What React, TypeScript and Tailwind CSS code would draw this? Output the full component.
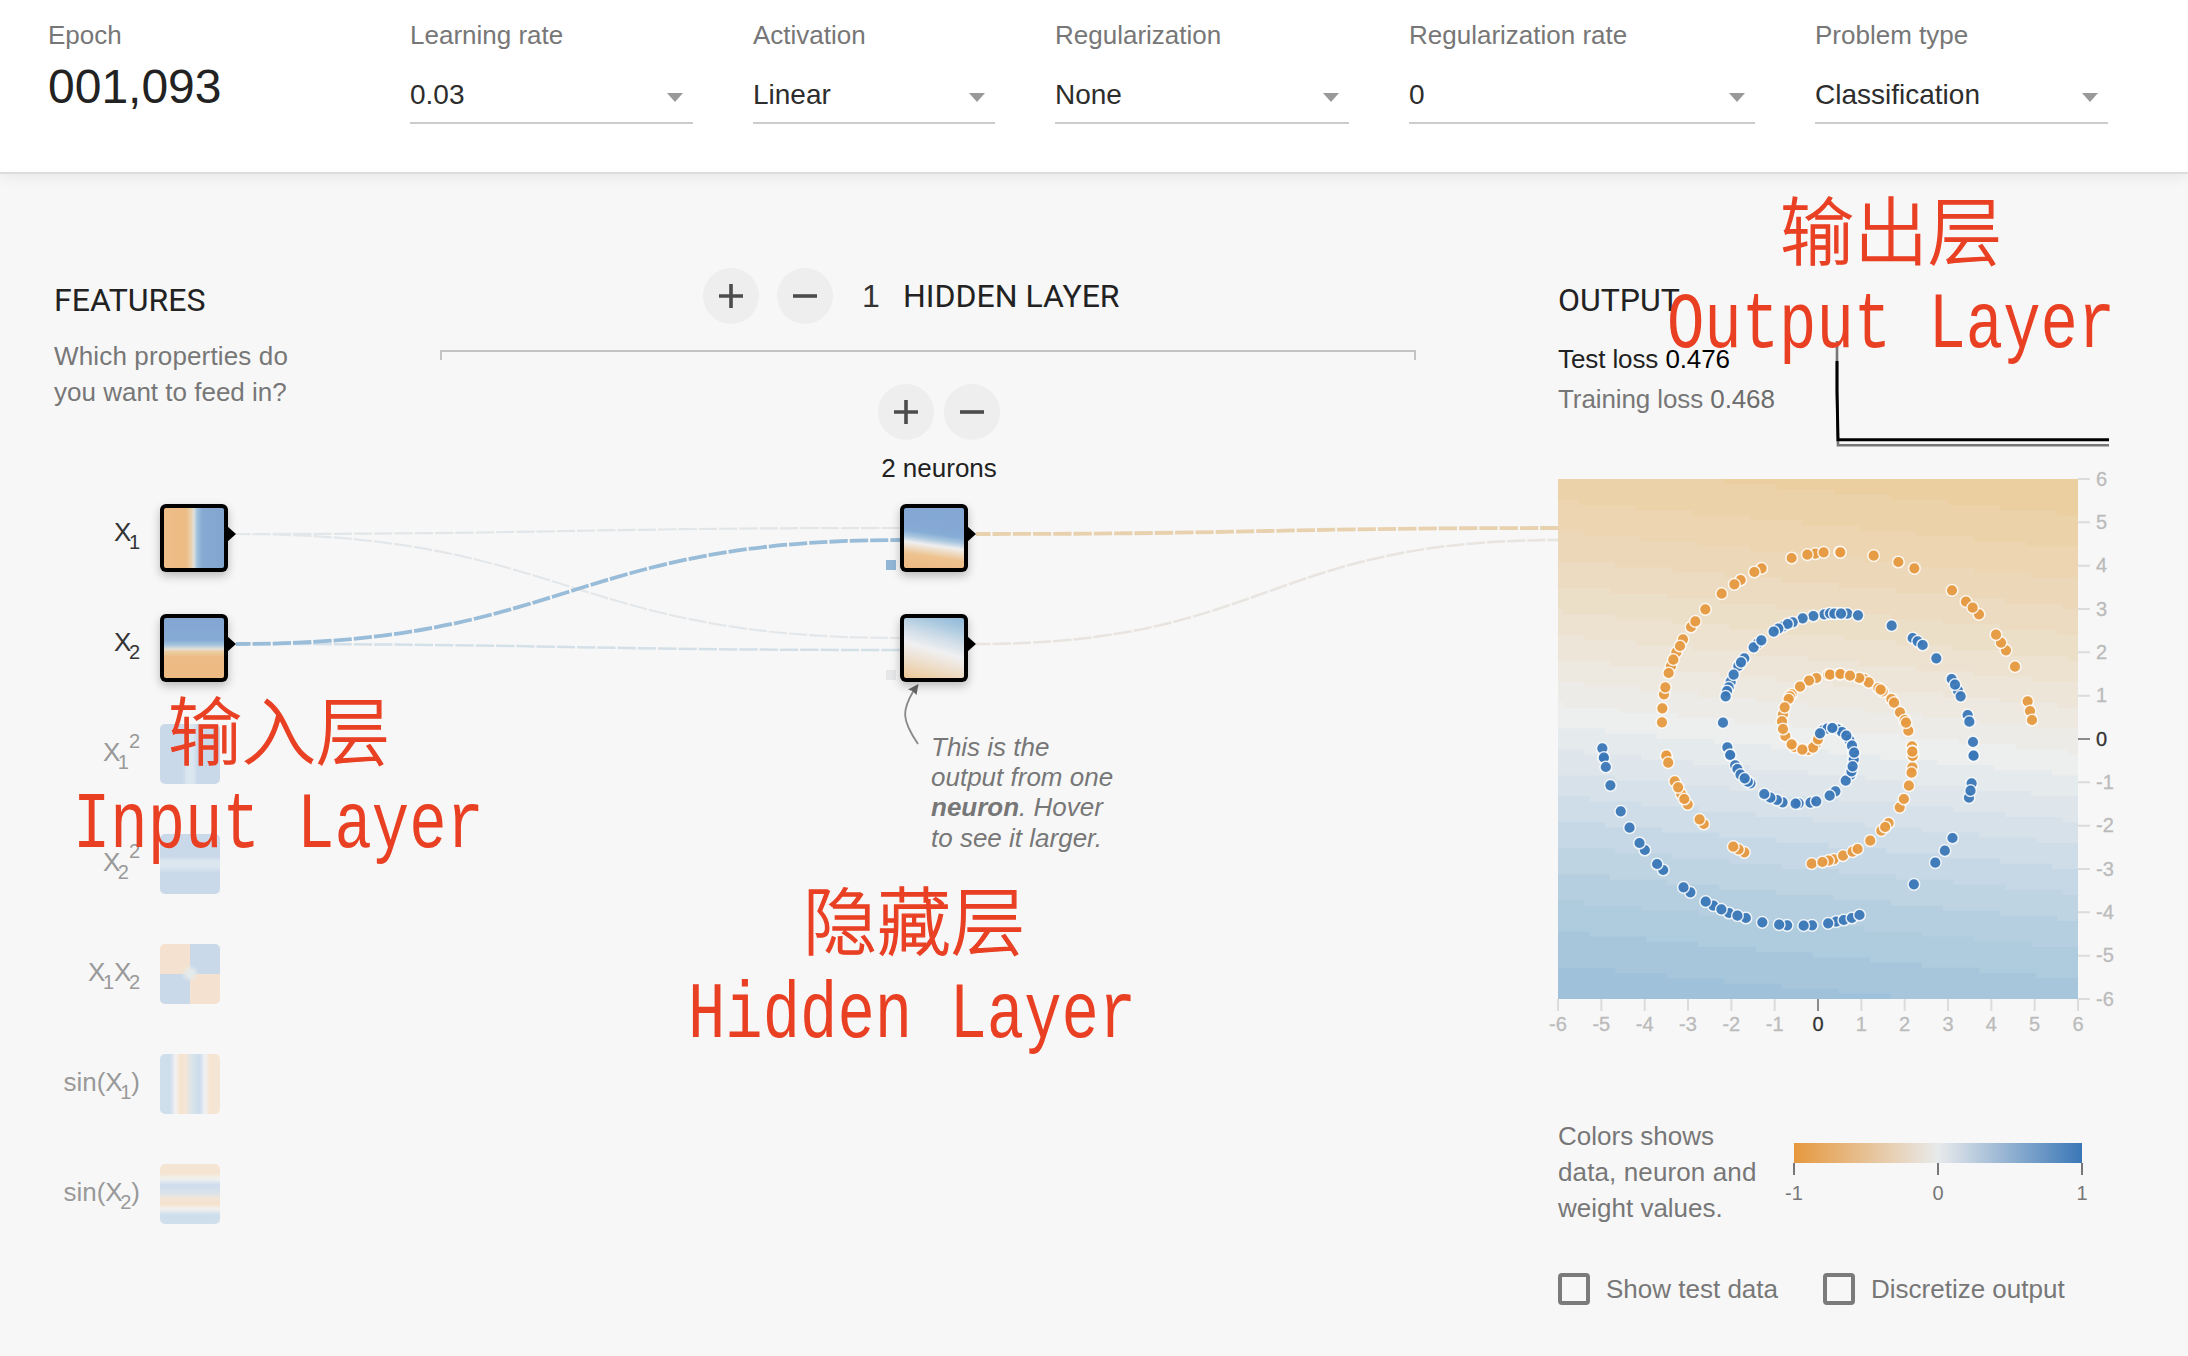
import React from "react";

const HELV = "font-['Liberation_Sans',Arial,sans-serif]";

/* ---------- header ---------- */

function Select({ label, value, className }: { label: string; value: string; className: string }) {
  return (
    <div className={className}>
      <div className="text-[26px] leading-[36px] text-[#777]">{label}</div>
      <div className="mt-[23px] flex h-12 justify-between border-b-2 border-[#ccc] pr-[10px]">
        <span className="pt-px text-[28px] leading-[36px] text-[#2d2d2d]">{value}</span>
        <svg width="16" height="9" viewBox="0 0 16 9" className="mt-[17px]">
          <path d="M0 0H16L8 9Z" fill="#999" />
        </svg>
      </div>
    </div>
  );
}

function Header() {
  return (
    <header className="relative z-10 flex h-[174px] border-b-2 border-[#dcdcdc] bg-white pt-[17px] pl-12 shadow-[0_2px_14px_rgba(0,0,0,0.07)]">
      <div className="w-[362px]">
        <div className="text-[26px] leading-[36px] text-[#777]">Epoch</div>
        <div className="mt-[6px] text-[48px] leading-[56px] text-[#222]">001,093</div>
      </div>
      <Select label="Learning rate" value="0.03" className="w-[283px]" />
      <Select label="Activation" value="Linear" className="ml-[60px] w-[242px]" />
      <Select label="Regularization" value="None" className="ml-[60px] w-[294px]" />
      <Select label="Regularization rate" value="0" className="ml-[60px] w-[346px]" />
      <Select label="Problem type" value="Classification" className="ml-[60px] w-[293px]" />
    </header>
  );
}

/* ---------- features ---------- */

const Sub = ({ children }: { children: React.ReactNode }) => (
  <span className="relative top-[8px] -ml-[2.5px] text-[20px]">{children}</span>
);
const Sup = ({ children }: { children: React.ReactNode }) => (
  <span className="relative top-[-13px] text-[20px]">{children}</span>
);

function Node({ fill }: { fill: string }) {
  return (
    <div className="relative size-[68px] shrink-0 rounded-[6px] bg-black p-1 shadow-[0_4px_10px_rgba(0,0,0,0.25)]">
      <div className={"size-[60px] rounded-[2px] " + fill} />
      <svg width="9" height="16" viewBox="0 0 9 16" className="absolute top-[22px] left-[67px]">
        <path d="M0 0L9 8L0 16Z" fill="#000" />
      </svg>
    </div>
  );
}

function Tile({ fill }: { fill: string }) {
  return <div className={"size-[60px] shrink-0 rounded-[5px] " + fill} />;
}

function FeatureRow({ label, active, children }: { label: React.ReactNode; active?: boolean; children: React.ReactNode }) {
  return (
    <div className="flex h-[110px] gap-5">
      <div
        className={
          "w-[86px] pt-[10px] text-right text-[26px] leading-[36px] whitespace-nowrap " +
          (active ? "text-[#333]" : "text-[#999]")
        }
      >
        {label}
      </div>
      {children}
    </div>
  );
}

function Features() {
  return (
    <section className="ml-[54px] w-[386px] pt-[106px]">
      <h2 className="font-[Roboto,sans-serif] text-[32px] leading-[40px] text-[#222]">FEATURES</h2>
      <p className="mt-[18px] text-[26px] leading-[36px] text-[#777]">
        <span className="tracking-[0.15px]">Which properties do</span>
        <br />
        you want to feed in?
      </p>
      <div className="mt-[94px]">
        <FeatureRow active label={<>X<Sub>1</Sub></>}>
          <Node fill="bg-[linear-gradient(90deg,#eebe88_0%,#edbb84_36%,#ead0ab_45%,#dfe0dc_50%,#a1c3de_55%,#85a9d3_64%,#83a6d0_100%)]" />
        </FeatureRow>
        <FeatureRow active label={<>X<Sub>2</Sub></>}>
          <Node fill="bg-[linear-gradient(180deg,#83a6d3_0%,#86abd3_37%,#a5c5dd_45%,#e6e0d4_52%,#ebcda3_56%,#edbb85_65%,#edba84_100%)]" />
        </FeatureRow>
        <FeatureRow label={<>X<Sub>1</Sub><Sup>2</Sup></>}>
          <Tile fill="bg-[linear-gradient(90deg,#cad9ea_0%,#cad9ea_38%,#d9e5ef_44%,#dce7ef_50%,#d9e5ef_56%,#cad9ea_62%)]" />
        </FeatureRow>
        <FeatureRow label={<>X<Sub>2</Sub><Sup>2</Sup></>}>
          <Tile fill="bg-[linear-gradient(180deg,#cad9ea_0%,#cad9ea_38%,#d9e5ef_44%,#dce7ef_50%,#d9e5ef_56%,#cad9ea_64%)]" />
        </FeatureRow>
        <FeatureRow label={<>X<Sub>1</Sub>X<Sub>2</Sub></>}>
          <Tile fill="bg-[radial-gradient(circle_at_50%_49%,#e6eaea_0px,#e6eaea_3px,transparent_9px),conic-gradient(#cad9ea_0_25%,#f5e1cf_25%_50%,#cad9ea_50%_75%,#f5e1cf_75%)]" />
        </FeatureRow>
        <FeatureRow label={<>sin(X<Sub>1</Sub>)</>}>
          <Tile fill="bg-[linear-gradient(90deg,#d0dfeb_0%,#cddeec_17%,#f3f1f2_26%,#f5e2cd_34%,#f4e5d6_43%,#dbe5ea_52%,#cbdcec_66%,#f1f2f5_75%,#f5e4d0_83%,#f5e5d5_100%)]" />
        </FeatureRow>
        <FeatureRow label={<>sin(X<Sub>2</Sub>)</>}>
          <Tile fill="bg-[linear-gradient(180deg,#f5e5d5_0%,#f5e4d0_15%,#f1f2f0_25%,#cddcec_35%,#d9e3ea_48%,#f2e6d8_57%,#f5e1cb_66%,#f3f1ef_75%,#cddeec_85%,#d0dfeb_100%)]" />
        </FeatureRow>
      </div>
    </section>
  );
}

/* ---------- hidden layer ---------- */

function RoundButton({ kind }: { kind: "plus" | "minus" }) {
  return (
    <button className="flex size-14 items-center justify-center rounded-full bg-[#eee]">
      <svg width="24" height="24" viewBox="0 0 24 24" stroke="#4c4c4c" strokeWidth="3.6">
        <path d={kind === "plus" ? "M0 12H24M12 0V24" : "M0 12H24"} />
      </svg>
    </button>
  );
}

function HiddenLayers() {
  return (
    <section className="w-[976px] pt-[94px]">
      <div className="flex h-14 items-center pl-[263px]">
        <RoundButton kind="plus" />
        <div className="w-[18px]" />
        <RoundButton kind="minus" />
        <span className="ml-[29px] w-[41px] text-[32px] leading-[40px] text-[#333]">1</span>
        <h2 className="font-[Roboto,sans-serif] text-[32px] leading-[40px] whitespace-nowrap text-[#222]">HIDDEN LAYER</h2>
      </div>
      <div className="mt-[26px] h-[10px] border-x-2 border-t-2 border-[#c4c4c4]" />
      <div className="mt-6 ml-[438px] flex w-[122px] justify-between">
        <RoundButton kind="plus" />
        <RoundButton kind="minus" />
      </div>
      <div className="mt-3 ml-[399px] w-[200px] text-center text-[26px] leading-[32px] text-[#222]">2 neurons</div>
      <div className="mt-5 ml-[460px]">
        <div className="h-[110px]">
          <Node fill="bg-[linear-gradient(188deg,#83a6d3_0%,#85a9d4_36%,#86add6_44%,#a9c6df_52%,#efefef_61%,#eedcc6_68%,#eec28e_78%,#edb983_100%)]" />
        </div>
        <div className="h-[110px]">
          <Node fill="bg-[linear-gradient(196deg,#90b9da_0%,#a9c8df_16%,#cfdde8_34%,#f0f0f1_53%,#eee3d6_68%,#edd7ba_82%,#eec796_100%)]" />
        </div>
      </div>
      <p className="mt-[7.5px] ml-[491px] text-[26px] leading-[30.4px] whitespace-nowrap text-[#777] italic">
        This is the
        <br />
        output from one
        <br />
        <b>neuron</b>. Hover
        <br />
        to see it larger.
      </p>
    </section>
  );
}

/* Connections between the nodes, drawn over the whole network area. */
function Links() {
  return (
    <svg width="2188" height="1182" viewBox="0 174 2188 1182" fill="none" className="pointer-events-none absolute inset-0">
      <g strokeDasharray="18.3 2">
        <path d="M236 534C568 534 568 528 900 528" stroke="#e2e6e8" strokeWidth="2.2" strokeDashoffset="4" />
        <path d="M236 534C568 534 568 638 900 638" stroke="#e4e7ea" strokeWidth="2.2" strokeDashoffset="4" />
        <path d="M236 644C568 644 568 650 900 650" stroke="#d4e0e7" strokeWidth="2.5" strokeDashoffset="4" />
        <path d="M236 644C568 644 568 540 900 540" stroke="#99bcd8" strokeWidth="3.8" strokeDashoffset="4" />
        <path d="M976 534C1267 534 1267 528 1558 528" stroke="#e8d1ae" strokeWidth="3.8" strokeDashoffset="4" />
        <path d="M976 644C1267 644 1267 540 1558 540" stroke="#e8e4e0" strokeWidth="2.5" strokeDashoffset="4" />
      </g>
      <rect x="886" y="560" width="10" height="10" fill="#91b6d6" />
      <rect x="886" y="670" width="10" height="10" fill="#e6e7e8" />
      <path d="M918 744C901 719 902 710 914 690" stroke="#888" strokeWidth="1.8" />
      <path d="M918.5 684L908 689.5L912.5 691L916.5 695Z" fill="#666" />
    </svg>
  );
}

/* ---------- output ---------- */

const lerp = (a: number, b: number, t: number) => a + (b - a) * t;

function shade(v: number) {
  const end = v < 0 ? [228, 158, 48] : [45, 127, 184];
  const rgb = [232, 234, 235].map((c, i) => Math.round(lerp(247, lerp(c, end[i], Math.abs(v)), 0.65)));
  return `rgb(${rgb.join(",")})`;
}

const CELL = 5.2;

/* Decision surface: quantised bands whose borders step along the 100 x 100 cell grid. */
function Surface() {
  const bands = [];
  for (let k = -10; k <= 11; k++) {
    const offset = Math.atanh((k - 0.5) * (2 / 31)) / 0.00286;
    let d = "M0 520";
    for (let i = 0; i < 100; i++) {
      const x = i * CELL;
      const y = Math.round((237 + 0.093 * x + offset) / CELL) * CELL;
      d += `V${Math.min(520, Math.max(0, y)).toFixed(1)}H${(x + CELL).toFixed(1)}`;
    }
    bands.push(<path key={k} d={d + "V520Z"} fill={shade(k * (2 / 31))} />);
  }
  return (
    <g>
      <rect width="520" height="520" fill={shade(-11 * (2 / 31))} />
      {bands}
    </g>
  );
}

/* Samples as pixel positions inside the plot. */
const p = (ox: number, oy: number, sx: number, pts: number[][]) =>
  pts.map(([x, y]) => [ox + x / sx, oy + y / 3]);

const ORANGE = [
  ...p(-18, -19, 3, [
    [755, 294], [826, 281], [802, 284], [851, 277], [899, 276], [665, 325], [643, 336], [602, 360], [583, 373],
    [545, 401], [496, 448], [453, 501], [466, 484], [429, 538], [409, 577], [420, 558], [393, 618], [400, 599],
    [386, 639], [372, 703], [376, 682], [367, 745], [366, 787], [379, 888], [899, 642], [865, 644], [829, 654],
    [807, 662], [780, 680], [755, 703], [750, 709], [746, 717], [729, 763], [734, 742], [726, 784], [736, 828],
    [729, 807], [763, 861], [755, 853], [805, 870], [828, 851], [819, 863], [834, 838], [787, 869],
  ]),
  ...p(272, -19, 3, [
    [31, 277], [131, 287], [205, 306], [253, 325], [366, 391], [408, 425], [447, 463], [428, 443], [528, 571],
    [513, 548], [498, 524], [555, 620], [593, 724], [600, 753], [606, 780], [0, 644], [31, 642], [102, 657],
    [116, 667], [88, 654], [60, 647], [145, 684], [158, 694], [152, 689], [184, 717], [192, 728], [210, 757],
    [224, 780], [235, 812], [228, 788], [246, 859], [249, 887], [247, 873],
  ]),
  ...p(-18, 271, 2.6133, [
    [330, 17], [335, 38], [352, 94], [369, 132], [361, 112], [386, 163], [377, 147], [428, 222], [417, 208],
    [534, 307], [519, 298], [505, 290], [710, 341], [767, 328], [754, 332], [738, 336], [792, 317], [817, 305],
    [830, 297], [863, 272], [892, 242], [911, 219], [902, 231], [940, 172], [951, 147], [964, 107], [973, 52],
    [971, 68], [974, 18], [973, 5],
  ]),
];

const BLUE = [
  ...p(-18, -19, 3, [
    [902, 461], [868, 461], [886, 461], [853, 463], [820, 468], [788, 475], [758, 487], [730, 499], [743, 492],
    [715, 506], [701, 515], [653, 550], [641, 562], [664, 541], [613, 595], [595, 618], [603, 607], [572, 665],
    [581, 644], [566, 682], [561, 693], [557, 709], [549, 788], [562, 862], [570, 885], [191, 893], [187, 865],
    [850, 810], [862, 806], [840, 820], [895, 808], [878, 804],
  ]),
  ...p(272, -19, 3, [
    [0, 460], [13, 461], [52, 461], [33, 461], [84, 466], [185, 497], [248, 534], [263, 544], [278, 555],
    [319, 595], [365, 657], [384, 692], [375, 674], [392, 709], [413, 765], [418, 785], [429, 846], [431, 887],
    [22, 808], [36, 816], [7, 804], [58, 840], [49, 827], [70, 878], [66, 857], [71, 898],
  ]),
  ...p(-18, 271, 2.6133, [
    [167, 23], [172, 51], [184, 106], [211, 184], [234, 233], [274, 300], [260, 279], [322, 360], [306, 342],
    [393, 427], [375, 412], [453, 467], [433, 455], [494, 489], [474, 478], [538, 504], [516, 497], [581, 517],
    [646, 526], [625, 524], [711, 526], [689, 527], [774, 515], [753, 520], [794, 510], [815, 504], [835, 495],
    [977, 403], [1033, 338], [1058, 302], [1078, 264], [1121, 143], [1128, 100], [1125, 122], [1133, 17],
    [497, 15], [510, 46], [516, 57], [524, 74], [550, 100], [543, 95], [535, 85], [634, 157], [619, 150],
    [602, 143], [586, 132], [676, 160], [668, 161], [707, 158], [722, 154], [772, 124], [757, 137], [811, 75],
    [799, 92], [814, 64], [820, 28], [817, 49], [821, 8],
  ]),
];

const TICKS = [-6, -5, -4, -3, -2, -1, 0, 1, 2, 3, 4, 5, 6];

function Plot() {
  return (
    <svg width="590" height="560" viewBox="0 0 590 560" className="mt-[29px] block overflow-visible">
      <Surface />
      <g stroke="#fff" strokeOpacity="0.85" strokeWidth="1.5">
        {ORANGE.map(([x, y], i) => (
          <circle key={i} cx={x} cy={y} r="5.8" fill="#e6993f" fillOpacity="0.95" />
        ))}
        {BLUE.map(([x, y], i) => (
          <circle key={i} cx={x} cy={y} r="5.8" fill="#3a77b7" fillOpacity="0.95" />
        ))}
      </g>
      <g fontSize="20">
        {TICKS.map((t) => {
          const at = ((t + 6) * 520) / 12;
          const line = t === 0 ? "#8c8c8c" : "#dcdcdc";
          const text = t === 0 ? "#333" : "#bbb";
          return (
            <g key={t}>
              <path d={`M${at} 520V532M520 ${520 - at}H532`} stroke={line} strokeWidth="2" />
              <text x={at} y="551.7" textAnchor="middle" fill={text} stroke={text} strokeWidth="0.3">{t}</text>
              <text x="538" y={527 - at - 0.5} fill={text} stroke={text} strokeWidth="0.3">{t}</text>
            </g>
          );
        })}
      </g>
    </svg>
  );
}

function Checkbox({ label, className }: { label: string; className: string }) {
  return (
    <label className={"flex items-center gap-4 " + className}>
      <span className="size-8 rounded-[4px] border-4 border-[#7b7b7b]" />
      <span className="text-[26px] leading-[32px] text-[#777]">{label}</span>
    </label>
  );
}

function Output() {
  return (
    <section className="ml-[142px] w-[600px] pt-[106px]">
      <h2 className="font-[Roboto,sans-serif] text-[32px] leading-[40px] text-[#222]">OUTPUT</h2>
      <div className="mt-[19px] flex h-[111px]">
        <div className="w-[272px] text-[26px] leading-[40px]">
          <div className="tracking-[-0.1px] text-[#222]">Test loss <span className="text-black">0.476</span></div>
          <div className="tracking-[-0.1px] text-[#777]">Training loss <span className="text-[#6c6c6c]">0.468</span></div>
        </div>
        <svg width="280" height="111" viewBox="1830 339 280 111" fill="none">
          <path d="M1837 341V395L1838 445.3H2109" stroke="#777" strokeWidth="2.6" />
          <path d="M1837 361V390L1838 439.7H2109" stroke="#000" strokeWidth="3" />
        </svg>
      </div>
      <Plot />
      <div className="mt-[79px] flex">
        <p className="w-[216px] text-[26px] leading-[36px] whitespace-nowrap text-[#777]">
          Colors shows
          <br />
          <span className="tracking-[0.12px]">data, neuron and</span>
          <br />
          weight values.
        </p>
        <svg width="330" height="108" viewBox="-20 0 330 108">
          <defs>
            <linearGradient id="scale">
              <stop offset="0" stopColor="#e6983e" />
              <stop offset="0.5" stopColor="#e8eaeb" />
              <stop offset="1" stopColor="#3a77b7" />
            </linearGradient>
          </defs>
          <rect y="25" width="288" height="20" fill="url(#scale)" />
          <path d="M0 45V57M144 45V57M288 45V57" stroke="#777" strokeWidth="2" />
          <g fontSize="20" fill="#777" textAnchor="middle">
            <text x="0" y="81.7">-1</text>
            <text x="144" y="81.7">0</text>
            <text x="288" y="81.7">1</text>
          </g>
        </svg>
      </div>
      <div className="mt-[47px] flex">
        <Checkbox label="Show test data" className="w-[265px]" />
        <Checkbox label="Discretize output" className="" />
      </div>
    </section>
  );
}

/* ---------- red notes laid over the page ---------- */

function Note({ zh, en, className, zhClass }: { zh: string; en: string; className: string; zhClass: string }) {
  return (
    <div className={"absolute text-[#e94024] " + className}>
      <div
        className={
          "font-['Noto_Sans_CJK_SC',sans-serif] text-[74px] leading-[80px] font-light [-webkit-text-stroke:1.3px_#e94024] " +
          zhClass
        }
      >
        {zh}
      </div>
      <div className="mt-[17px] origin-left scale-x-[0.778] font-['Liberation_Mono',monospace] text-[80px] leading-[84px] whitespace-pre">
        {en}
      </div>
    </div>
  );
}

export default function App() {
  return (
    <div className={"h-[1356px] w-[2188px] overflow-hidden bg-[#f7f7f7] " + HELV}>
      <Header />
      <main className="relative flex h-[1182px]">
        <Links />
        <Features />
        <HiddenLayers />
        <Output />
        <Note zh="输入层" en="Input Layer" className="top-[513px] left-[73px] w-[420px]" zhClass="ml-[95px]" />
        <Note zh="隐藏层" en="Hidden Layer" className="top-[703px] left-[688px] w-[450px]" zhClass="ml-[115px]" />
        <Note zh="输出层" en="Output Layer" className="top-[13px] left-[1667px] w-[450px]" zhClass="ml-[113px]" />
      </main>
    </div>
  );
}
